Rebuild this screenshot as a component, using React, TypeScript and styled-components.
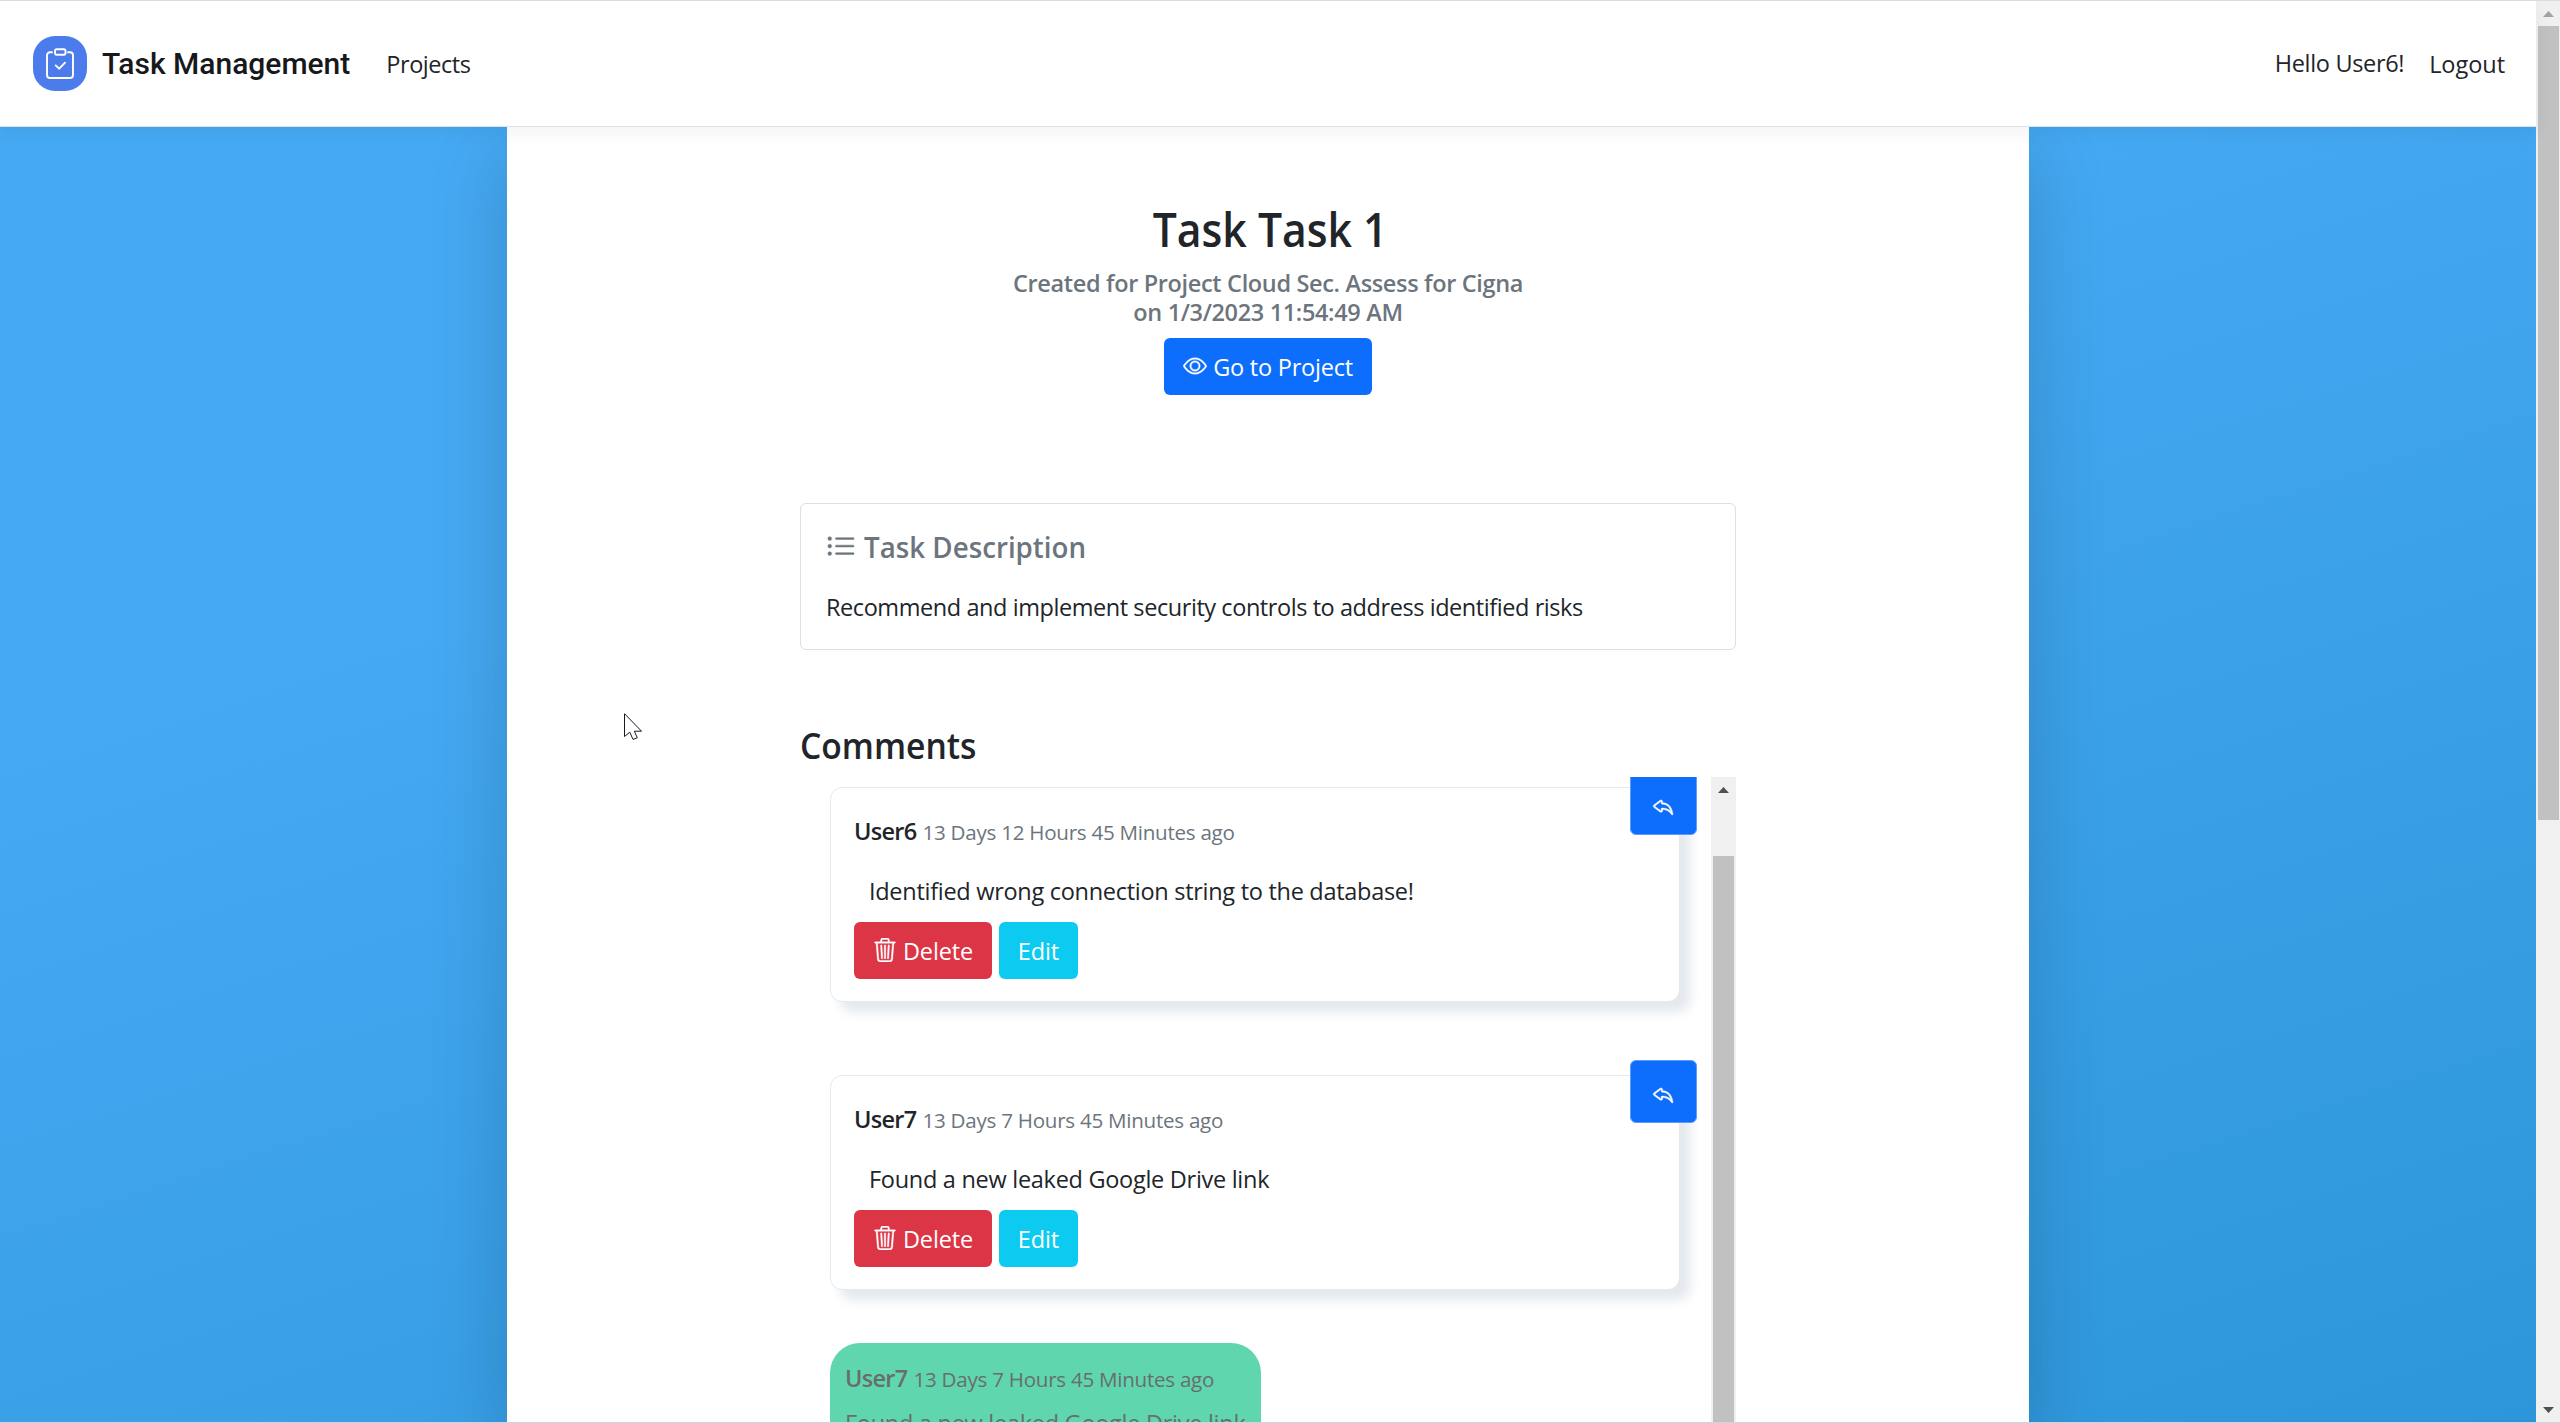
import React from "react";
import styled, { createGlobalStyle } from "styled-components";
import { BsEye, BsListUl, BsReply, BsTrash3 } from "react-icons/bs";

const GlobalStyle = createGlobalStyle`
  *, *::before, *::after { box-sizing: border-box; }
  body {
    margin: 0;
    background: #fff;
    color: #212529;
    font-family: "Open Sans", "Noto Sans", sans-serif;
    font-size: 23.5px;
    line-height: 36px;
    overflow: hidden;
  }
  h1, h2, h3, p { margin: 0; }
`;

const Window = styled.div`
  position: relative;
  display: flex;
  height: 1423px;
  border-top: 1px solid #dcdcdc;
  border-bottom: 1px solid #c8d6e2;
  overflow: hidden;
`;

const Page = styled.div`
  flex: 1;
  display: flex;
  flex-direction: column;
  min-width: 0;
`;

const Header = styled.header`
  position: relative;
  z-index: 2;
  flex: none;
  display: flex;
  align-items: center;
  height: 126px;
  padding: 0 31px 0 33px;
  background: #fff;
  border-bottom: 1px solid #dee2e6;
  box-shadow: 0 6px 18px rgba(0, 0, 0, 0.05);
`;

const Logo = styled.div`
  display: grid;
  place-items: center;
  width: 54px;
  height: 55px;
  margin-right: 15px;
  border-radius: 22px;
  background: #4c7bec;
`;

const Brand = styled.span`
  margin-right: 36px;
  color: #16181b;
  font: 500 30px/40px Roboto, sans-serif;
`;

const NavLink = styled.a<{ $tracking?: number }>`
  padding-top: 1px;
  letter-spacing: ${(p) => p.$tracking ?? 0}px;
`;

const Account = styled.nav`
  display: flex;
  gap: 25px;
  margin-left: auto;
`;

const Greeting = styled.span`
  letter-spacing: -0.336px;
`;

const Backdrop = styled.div`
  flex: 1;
  display: flex;
  justify-content: center;
  min-height: 0;
  background: linear-gradient(162deg, #45a9f3 30%, #2d96da 100%);
`;

const Sheet = styled.main`
  display: flex;
  flex-direction: column;
  width: 1522px;
  padding: 74px 293px 0;
  background: #fff;
  box-shadow: 0 24px 72px rgba(0, 0, 0, 0.175);
`;

const TaskHead = styled.section`
  display: flex;
  flex-direction: column;
  align-items: center;
`;

const Title = styled.h1`
  padding-left: 4px;
  font-size: 47px;
  font-weight: 600;
  line-height: 57px;
  transform: scaleX(0.908);
`;

const Subtitle = styled.p`
  margin: 11px 0;
  color: #6c757d;
  font-weight: 600;
  line-height: 28.8px;
  letter-spacing: -0.34px;
  text-align: center;
`;

const tones = { primary: "#0d6efd", danger: "#dc3545", info: "#0dcaf0" };

const Button = styled.button<{ $tone: keyof typeof tones; $width: number; $tracking: number }>`
  display: flex;
  align-items: center;
  justify-content: center;
  gap: 6px;
  width: ${(p) => p.$width}px;
  height: 57px;
  padding: 2px 0 0;
  border: 0;
  border-radius: 6px;
  background: ${(p) => tones[p.$tone]};
  color: #fff;
  font: inherit;
  letter-spacing: ${(p) => p.$tracking}px;

  svg {
    position: relative;
    top: -1px;
    stroke-width: 0.25px;
  }
`;

const DescriptionCard = styled.section`
  flex: none;
  height: 147px;
  margin-top: 108px;
  padding: 25px;
  border: 1px solid #dfdfdf;
  border-radius: 6px;
`;

const CardTitle = styled.h3`
  display: flex;
  align-items: center;
  gap: 8px;
  margin-bottom: 24px;
  color: #6c757d;
  font-size: 29.4px;
  font-weight: 600;
  line-height: 36px;

  svg {
    stroke-width: 0.25px;
  }
`;

const Condensed = styled.span<{ $ratio: number }>`
  transform: scaleX(${(p) => p.$ratio});
  transform-origin: left;
`;

const Description = styled.p`
  letter-spacing: -0.43px;
  white-space: nowrap;
`;

const CommentsTitle = styled.h2`
  display: flex;
  margin: 74px 0 10px;
  font-size: 35.2px;
  font-weight: 600;
  line-height: 43px;
`;

const CommentsPane = styled.section`
  flex: 1;
  display: flex;
  min-height: 0;
  overflow: hidden;
`;

const CommentList = styled.div`
  flex: 1;
  display: flex;
  flex-direction: column;
  padding: 10px 31px 0 30px;
`;

const Comment = styled.article`
  position: relative;
  flex: none;
  height: 215px;
  margin-bottom: 73px;
  padding: 25px 23px 0;
  border: 1px solid #e7eaed;
  border-radius: 12px;
  background: #fff;
  box-shadow: 10px 10px 12px #e3e8ed;
`;

const Byline = styled.div`
  display: flex;
  align-items: baseline;
  gap: 6px;
  height: 36px;
  white-space: nowrap;
`;

const Author = styled.span`
  font-weight: 600;
  letter-spacing: -0.7px;
`;

const Age = styled.span<{ $muted?: boolean }>`
  color: ${(p) => (p.$muted ? "inherit" : "#6c757d")};
  font-size: 20.6px;
  letter-spacing: -0.267px;
`;

const CommentText = styled.p`
  margin: 24px 0 13px;
  padding-left: 15px;
  letter-spacing: -0.285px;
`;

const Actions = styled.div`
  display: flex;
  gap: 7px;
`;

const ReplyButton = styled.button`
  position: absolute;
  top: -16px;
  right: -18px;
  display: grid;
  place-items: center;
  width: 67px;
  height: 63px;
  padding: 5px 1px 0 0;
  border: 1px solid #5a9dfe;
  border-radius: 6px;
  background: #0d6efd;
  color: #fff;

  svg {
    stroke-width: 0.3px;
  }
`;

const Reply = styled.article`
  flex: none;
  width: 431px;
  height: 140px;
  margin-top: -20px;
  padding: 17px 15px;
  border-radius: 30px;
  background: #60d6ae;
  color: #676e6e;
`;

const ReplyText = styled.p`
  margin-top: 9px;
  letter-spacing: -0.278px;
  white-space: nowrap;
`;

const ScrollTrack = styled.div<{ $width: number }>`
  flex: none;
  display: flex;
  flex-direction: column;
  align-items: center;
  width: ${(p) => p.$width}px;
  background: #f0f0f0;
`;

const ScrollArrow = styled.svg`
  flex: none;
  display: block;
  width: 11px;
  height: 6px;
`;

const ScrollThumb = styled.div<{ $height?: number }>`
  flex: ${(p) => (p.$height ? "none" : "1")};
  width: 21px;
  height: ${(p) => (p.$height ? p.$height + "px" : "auto")};
  background: #c1c1c1;
`;

const TrackGap = styled.div<{ $height?: number }>`
  flex: ${(p) => (p.$height ? "none" : "1")};
  height: ${(p) => p.$height ?? 0}px;
`;

const Pointer = styled.svg`
  position: absolute;
  left: 624px;
  top: 712px;
  z-index: 3;
`;

const comments = [
  { author: "User6", age: "13 Days 12 Hours 45 Minutes ago", text: "Identified wrong connection string to the database!" },
  { author: "User7", age: "13 Days 7 Hours 45 Minutes ago", text: "Found a new leaked Google Drive link" },
];

function Arrow({ down, color }: { down?: boolean; color: string }) {
  return (
    <ScrollArrow viewBox="0 0 11 6">
      <path d={down ? "M0 0H11L5.5 6Z" : "M0 6H11L5.5 0Z"} fill={color} />
    </ScrollArrow>
  );
}

export default function App() {
  return (
    <>
      <GlobalStyle />
      <Window>
        <Page>
          <Header>
            <Logo>
              <svg width="28" height="31" viewBox="0 0 28 31" fill="none" stroke="#fff" strokeWidth="1.9" strokeLinecap="round" strokeLinejoin="round">
                <path d="M6 4.2H4a3 3 0 0 0-3 3V27a3 3 0 0 0 3 3h20a3 3 0 0 0 3-3V7.200a3 3 0 0 0-3-3h-2" />
                <rect x="9" y="1.300" width="10.500" height="5.400" rx="1.600" />
                <path d="M9.700 17.400l3.600 3.300 5.700-6" />
              </svg>
            </Logo>
            <Brand>Task Management</Brand>
            <NavLink $tracking={-0.448}>Projects</NavLink>
            <Account>
              <Greeting>Hello User6!</Greeting>
              <NavLink $tracking={-0.04}>Logout</NavLink>
            </Account>
          </Header>
          <Backdrop>
            <Sheet>
              <TaskHead>
                <Title>Task Task 1</Title>
                <Subtitle>
                  Created for Project Cloud Sec. Assess for Cigna
                  <br />
                  on 1/3/2023 11:54:49 AM
                </Subtitle>
                <Button $tone="primary" $width={208} $tracking={-0.226}>
                  <BsEye size={24} />
                  Go to Project
                </Button>
              </TaskHead>
              <DescriptionCard>
                <CardTitle>
                  <BsListUl size={30} />
                  <Condensed $ratio={0.9435}>Task Description</Condensed>
                </CardTitle>
                <Description>Recommend and implement security controls to address identified risks</Description>
              </DescriptionCard>
              <CommentsTitle>
                <Condensed $ratio={0.956}>Comments</Condensed>
              </CommentsTitle>
              <CommentsPane>
                <CommentList>
                  {comments.map((c) => (
                    <Comment key={c.author}>
                      <Byline>
                        <Author>{c.author}</Author>
                        <Age>{c.age}</Age>
                      </Byline>
                      <CommentText>{c.text}</CommentText>
                      <Actions>
                        <Button $tone="danger" $width={138} $tracking={-0.15}>
                          <BsTrash3 size={24} />
                          Delete
                        </Button>
                        <Button $tone="info" $width={79} $tracking={-0.12}>
                          Edit
                        </Button>
                      </Actions>
                      <ReplyButton>
                        <BsReply size={24} />
                      </ReplyButton>
                    </Comment>
                  ))}
                  <Reply>
                    <Byline>
                      <Author>User7</Author>
                      <Age $muted>13 Days 7 Hours 45 Minutes ago</Age>
                    </Byline>
                    <ReplyText>Found a new leaked Google Drive link</ReplyText>
                  </Reply>
                </CommentList>
                <ScrollTrack $width={25}>
                  <TrackGap $height={10} />
                  <Arrow color="#505050" />
                  <TrackGap $height={63} />
                  <ScrollThumb />
                </ScrollTrack>
              </CommentsPane>
            </Sheet>
          </Backdrop>
        </Page>
        <ScrollTrack $width={24}>
          <TrackGap $height={10} />
          <Arrow color="#a3a3a3" />
          <TrackGap $height={9} />
          <ScrollThumb $height={794} />
          <TrackGap />
          <Arrow down color="#505050" />
          <TrackGap $height={9} />
        </ScrollTrack>
        <Pointer width="20" height="30" viewBox="0 0 20 30">
          <path d="M.5.700V23.500L5.800 19.200L9 26.400L13.300 24.800L10.300 18.200H17.500Z" fill="#fff" stroke="#1a1625" strokeWidth="1" />
        </Pointer>
      </Window>
    </>
  );
}
